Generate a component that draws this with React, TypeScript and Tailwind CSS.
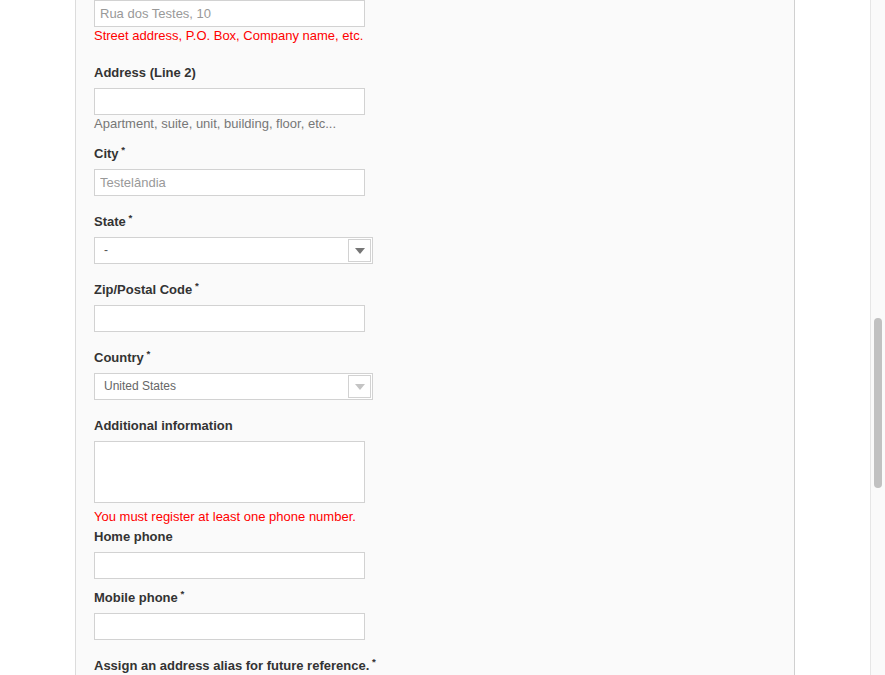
import type { ReactNode } from "react";

const inputCls =
  "block w-[271px] h-[27px] border border-[#d2d2d2] bg-white pl-[5px] text-[13px] text-[#333] placeholder:text-[#999] outline-none";

function Label({
  children,
  required,
  className
}: {
  children: ReactNode;
  required?: boolean;
  className: string;
}) {
  return (
    <label className={`block text-[13px] leading-[18px] font-bold text-[#333] ${className}`}>
      {children}
      {required ? <sup> *</sup> : null}
    </label>
  );
}

function Select({ value, muted }: { value: string; muted?: boolean }) {
  return (
    <div className="flex w-[279px] h-[27px] border border-[#d2d2d2] bg-white p-[1px]">
      <span
        className={`flex-1 pl-[8px] text-[12px] leading-[23px] ${
          muted ? "text-[#666]" : "text-[#555]"
        }`}
      >
        {value}
      </span>
      <span className="flex w-[23px] h-full items-center justify-center border border-[#d2d2d2] bg-white">
        <svg width="10" height="6" viewBox="0 0 10 6">
          <polygon points="0,0 10,0 5,6" fill={muted ? "#c4c4c4" : "#767676"} />
        </svg>
      </span>
    </div>
  );
}

export default function App() {
  return (
    <div
      className="flex h-[675px] w-full overflow-hidden bg-white"
      style={{ fontFamily: '"Liberation Sans", Arial, sans-serif' }}
    >
      <div className="w-[75px] shrink-0" />
      <div className="w-[720px] shrink-0 border-l border-r border-l-[#dcdcdc] border-r-[#d0d0d0] bg-[#fafafa] pl-[18px]">
        <input className={inputCls} placeholder="Rua dos Testes, 10" />
        <p className="text-[13px] leading-[18px] text-[#f00]">
          Street address, P.O. Box, Company name, etc.
        </p>

        <Label className="mt-[19px] mb-[6px]">Address (Line 2)</Label>
        <input className={inputCls} />
        <p className="text-[13px] leading-[18px] text-[#777]">
          Apartment, suite, unit, building, floor, etc...
        </p>

        <Label required className="mt-[12px] mb-[6px]">City</Label>
        <input className={inputCls} placeholder="Testelândia" />

        <Label required className="mt-[17px] mb-[6px]">State</Label>
        <Select value="-" />

        <Label required className="mt-[17px] mb-[6px]">Zip/Postal Code</Label>
        <input className={inputCls} />

        <Label required className="mt-[17px] mb-[6px]">Country</Label>
        <Select value="United States" muted />

        <Label className="mt-[17px] mb-[6px]">Additional information</Label>
        <textarea className="block w-[271px] h-[62px] resize-none border border-[#d2d2d2] bg-white outline-none" />
        <p className="mt-[5px] text-[13px] leading-[18px] text-[#f00]">
          You must register at least one phone number.
        </p>

        <Label className="mt-[2px] mb-[6px]">Home phone</Label>
        <input className={inputCls} />

        <Label required className="mt-[10px] mb-[6px]">Mobile phone</Label>
        <input className={inputCls} />

        <Label required className="mt-[17px] mb-[6px]">
          Assign an address alias for future reference.
        </Label>
      </div>
      <div className="flex-1" />
      <div className="w-[15px] shrink-0 border-l border-[#e6e6e6] bg-[#fafafa]">
        <div className="mt-[318px] ml-[3px] w-[8px] h-[170px] rounded-full bg-[#c1c1c1]" />
      </div>
    </div>
  );
}
